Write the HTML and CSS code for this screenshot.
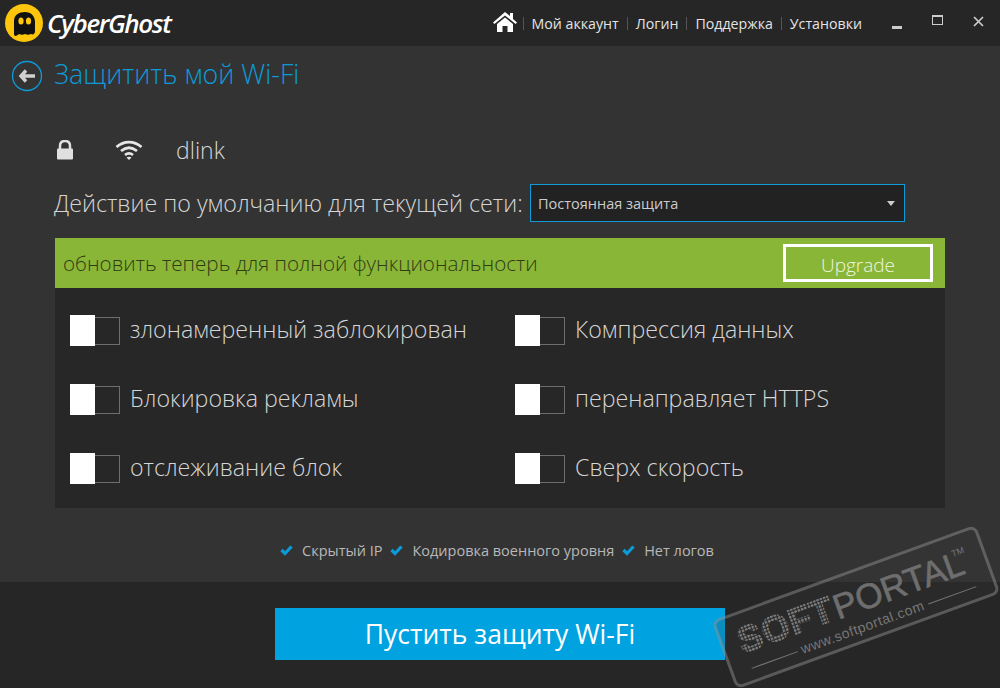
FILE: index.html
```html
<!DOCTYPE html>
<html lang="ru">
<head>
    <meta charset="UTF-8" />
    <title>CyberGhost</title>
    <link rel="stylesheet" href="styles.css">
</head>
<body>
    <!-- Header -->
    <header class="top-bar">
        <div class="logo">
            <svg class="logo-mark" width="38" height="38" viewBox="0 0 38 38">
                <circle cx="19" cy="19" r="19" fill="#fdc60d"/>
                <path d="M9 30 V17 C9 11 14 8 20 8 C26 8 30 12 30 18 V27 C30 30 28 31 26 30 C24 31 22 31 20 30 C18 31 16 31 14 30 C12 32 9 33 9 30 Z" fill="#111"/>
                <ellipse cx="16" cy="17" rx="2.600" ry="3.500" fill="#fdc60d"/>
                <ellipse cx="23.500" cy="17" rx="2.600" ry="3.500" fill="#fdc60d"/>
            </svg>
            <span class="logo-text">CyberGhost</span>
        </div>
        <nav class="top-nav">
            <svg class="home-icon" width="24" height="20" viewBox="0 0 24 20">
                <path d="M12 0 L17 4 V1 H20 V7 L24 10.500 L22.600 12 L12 3.400 L1.400 12 L0 10.500 Z" fill="#fff"/>
                <path d="M4 12 L12 5.500 L20 12 V20 H14.500 V14 H9.500 V20 H4 Z" fill="#fff"/>
            </svg>
            <a href="#">Мой аккаунт</a>
            <a href="#">Логин</a>
            <a href="#">Поддержка</a>
            <a href="#">Установки</a>
        </nav>
        <div class="window-controls">
            <span class="win-min"></span>
            <span class="win-max"></span>
            <svg width="11" height="11" viewBox="0 0 11 11"><path d="M1 1 L10 10 M10 1 L1 10" stroke="#ccc" stroke-width="1.700"/></svg>
        </div>
    </header>

    <!-- Main Content -->
    <main class="main-container">
        <div class="page-head">
            <svg width="32" height="32" viewBox="0 0 32 32">
                <circle cx="16" cy="16" r="14.500" fill="none" stroke="#0d9bd8" stroke-width="1.300"/>
                <path d="M15 10.500 L10 16 L15 21.500 M11 16 H24" fill="none" stroke="#d0d0d0" stroke-width="3.400"/>
            </svg>
            <h1 class="page-title">Защитить мой Wi-Fi</h1>
        </div>

        <div class="network-row">
            <svg class="lock-icon" width="18" height="20" viewBox="0 0 18 20">
                <path d="M4 9 V6 C4 2.800 6 1 9 1 C12 1 14 2.800 14 6 V9" fill="none" stroke="#e0e0e0" stroke-width="2.500"/>
                <rect x="1" y="8.500" width="16" height="11" rx="1" fill="#e0e0e0"/>
            </svg>
            <svg class="wifi-icon" width="28" height="20" viewBox="0 0 28 20">
                <path d="M1.500 7 C9 0.500 19 0.500 26.500 7 M6 11 C11 7 17 7 22 11 M10 15 C12.500 13 15.500 13 18 15" fill="none" stroke="#e6e6e6" stroke-width="2.800"/>
                <path d="M14 20 L11.500 17.500 C13 16.400 15 16.400 16.500 17.500 Z" fill="#e6e6e6"/>
            </svg>
            <span class="network-name">dlink</span>
        </div>

        <div class="default-row">
            <label class="default-label">Действие по умолчанию для текущей сети:</label>
            <div class="select-box">
                <span>Постоянная защита</span>
                <i class="select-arrow"></i>
            </div>
        </div>

        <section class="feature-panel">
            <div class="upgrade-bar">
                <span class="upgrade-text">обновить теперь для полной функциональности</span>
                <a href="#" class="upgrade-btn">Upgrade</a>
            </div>
            <div class="feature-grid">
                <div class="feature"><span class="toggle"></span><span>злонамеренный заблокирован</span></div>
                <div class="feature"><span class="toggle"></span><span>Компрессия данных</span></div>
                <div class="feature"><span class="toggle"></span><span>Блокировка рекламы</span></div>
                <div class="feature"><span class="toggle"></span><span>перенаправляет HTTPS</span></div>
                <div class="feature"><span class="toggle"></span><span>отслеживание блок</span></div>
                <div class="feature"><span class="toggle"></span><span>Сверх скорость</span></div>
            </div>
        </section>

        <ul class="perks">
            <li><svg width="13" height="11" viewBox="0 0 13 11"><path d="M1.500 5 L5 8.500 L11.500 1.500" fill="none" stroke="#0d9bd8" stroke-width="3.200"/></svg>Скрытый IP</li>
            <li><svg width="13" height="11" viewBox="0 0 13 11"><path d="M1.500 5 L5 8.500 L11.500 1.500" fill="none" stroke="#0d9bd8" stroke-width="3.200"/></svg>Кодировка военного уровня</li>
            <li><svg width="13" height="11" viewBox="0 0 13 11"><path d="M1.500 5 L5 8.500 L11.500 1.500" fill="none" stroke="#0d9bd8" stroke-width="3.200"/></svg>Нет логов</li>
        </ul>
    </main>

    <!-- Footer -->
    <footer class="bottom-bar">
        <a href="#" class="start-btn">Пустить защиту Wi-Fi</a>
    </footer>

    <!-- Watermark -->
    <svg class="watermark" width="300" height="168" viewBox="0 0 300 168">
        <defs>
            <pattern id="dots" width="3.500" height="3.500" patternUnits="userSpaceOnUse">
                <rect width="2.300" height="2.300" fill="#808080"/>
            </pattern>
        </defs>
        <g transform="translate(156 87) rotate(-20)">
            <rect x="-139" y="-35" width="278" height="70" rx="6" fill="rgba(60,60,60,0.2)" stroke="rgba(150,150,150,0.45)" stroke-width="3"/>
            <text x="-122" y="5" class="wm-soft" fill="url(#dots)" stroke="url(#dots)" stroke-width="1.500" textLength="99">SOFT</text>
            <text x="-21" y="6" class="wm-portal">PORTAL</text>
            <text x="108" y="-14" class="wm-tm">TM</text>
            <text x="-66" y="26" class="wm-url">www.softportal.com</text>
            <path d="M-119 22 H-70 M69 22 H120" stroke="#777" stroke-width="1"/>
        </g>
    </svg>
</body>
</html>
```

FILE: styles.css
```css
* {
    box-sizing: border-box;
    margin: 0;
    padding: 0;
}

body {
    width: 1000px;
    height: 688px;
    position: relative;
    overflow: hidden;
    background-color: #333;
    color: #d6d6d6;
    font-family: 'Open Sans', sans-serif;
    font-weight: 300;
}

a {
    color: inherit;
    text-decoration: none;
}

/* Header */
.top-bar {
    height: 46px;
    background: #262626;
    display: flex;
    align-items: center;
    padding-left: 5px;
}

.logo {
    display: flex;
    align-items: center;
    gap: 4px;
}

.logo-text {
    font-size: 26px;
    font-weight: 600;
    font-style: italic;
    color: #fff;
    letter-spacing: -1.400px;
}

.top-nav {
    margin-left: auto;
    display: flex;
    align-items: center;
    font-size: 14.200px;
    font-weight: 400;
    color: #e4e4e4;
}

.home-icon {
    margin-right: 6px;
    margin-top: -3px;
}

.top-nav a {
    border-left: 1px solid #555;
    padding: 0 8px;
    line-height: 13px;
}

.window-controls {
    width: 130px;
    display: flex;
    align-items: center;
    padding: 0 16px 0 22px;
    justify-content: space-between;
}

.win-min {
    width: 10px;
    height: 3px;
    background: #ccc;
    margin-top: 8px;
}

.win-max {
    width: 11px;
    height: 10px;
    border: 1px solid #ccc;
    border-top-width: 2px;
    margin-top: -6px;
}

.window-controls svg {
    margin-top: -3px;
}

/* Main Content */
.main-container {
    height: 536px;
    padding: 12px 55px 0;
}

.page-head {
    display: flex;
    align-items: center;
    gap: 11px;
    margin-left: -44px;
}

.page-title {
    font-size: 26.800px;
    font-weight: 300;
    color: #0d9bd8;
    line-height: 32px;
    padding-bottom: 3px;
}

.network-row {
    display: flex;
    align-items: center;
    height: 28px;
    margin-top: 43px;
}

.lock-icon {
    margin-left: 1px;
}

.wifi-icon {
    margin-left: 41px;
}

.network-name {
    margin-left: 33px;
    font-size: 23px;
}

.default-row {
    display: flex;
    align-items: center;
    margin-top: 20px;
    margin-left: -1px;
}

.default-label {
    font-size: 23.250px;
    white-space: nowrap;
    width: 476px;
}

.select-box {
    width: 375px;
    height: 38px;
    background: #222;
    border: 1px solid #0d9bd8;
    display: flex;
    align-items: center;
    justify-content: space-between;
    padding: 0 9px 0 7px;
    font-size: 14.500px;
    font-weight: 400;
    color: #ccc;
}

.select-arrow {
    border-left: 4.500px solid transparent;
    border-right: 4.500px solid transparent;
    border-top: 5px solid #ccc;
}

/* Feature panel */
.feature-panel {
    margin-top: 16px;
    background: #272727;
}

.upgrade-bar {
    height: 50px;
    background: #8ab638;
    display: flex;
    align-items: center;
    justify-content: space-between;
    padding: 0 12px 0 8px;
}

.upgrade-text {
    font-size: 20.650px;
    font-weight: 300;
    color: #2f3c14;
}

.upgrade-btn {
    width: 150px;
    height: 38px;
    border: 3px solid #fff;
    padding-top: 3px;
    display: flex;
    align-items: center;
    justify-content: center;
    font-size: 19px;
    font-weight: 300;
    color: #eef5df;
}

.feature-grid {
    height: 220px;
    padding: 27px 15px 0;
    display: grid;
    grid-template-columns: 445px 1fr;
    grid-auto-rows: 69px;
}

.feature {
    display: flex;
    align-items: flex-start;
    gap: 10px;
    font-size: 23.200px;
    line-height: 29px;
    white-space: nowrap;
}

.toggle {
    width: 50px;
    height: 31px;
    display: flex;
    align-items: center;
}

.toggle::before {
    content: '';
    width: 25px;
    height: 31px;
    background: #fff;
}

.toggle::after {
    content: '';
    width: 25px;
    height: 26px;
    border: 1px solid #6e6e6e;
    border-left: 0;
}

.perks {
    list-style: none;
    display: flex;
    justify-content: center;
    gap: 8px;
    margin-top: 33px;
    padding-right: 6px;
    font-size: 14.500px;
    font-weight: 400;
    color: #b8b8b8;
}

.perks li {
    display: flex;
    align-items: center;
    gap: 9px;
}

/* Footer */
.bottom-bar {
    height: 106px;
    background: #262626;
    padding-top: 26px;
    display: flex;
    justify-content: center;
}

.start-btn {
    width: 450px;
    height: 52px;
    background: #00a2e0;
    color: #fff;
    font-size: 26.500px;
    font-weight: 400;
    display: flex;
    align-items: center;
    justify-content: center;
}

/* Watermark */
.watermark {
    position: absolute;
    left: 700px;
    top: 520px;
}

.wm-soft {
    font-family: 'Liberation Sans', sans-serif;
    font-size: 36px;
    font-weight: 700;
}

.wm-portal {
    font-family: 'Liberation Sans', sans-serif;
    font-size: 35px;
    fill: #6e6e6e;
    stroke: #6e6e6e;
    stroke-width: 0.600px;
}

.wm-tm {
    font-family: 'Liberation Sans', sans-serif;
    font-size: 9px;
    fill: #777;
}

.wm-url {
    font-family: 'Liberation Sans', sans-serif;
    font-size: 14px;
    letter-spacing: 0.500px;
    fill: #777;
}
```
